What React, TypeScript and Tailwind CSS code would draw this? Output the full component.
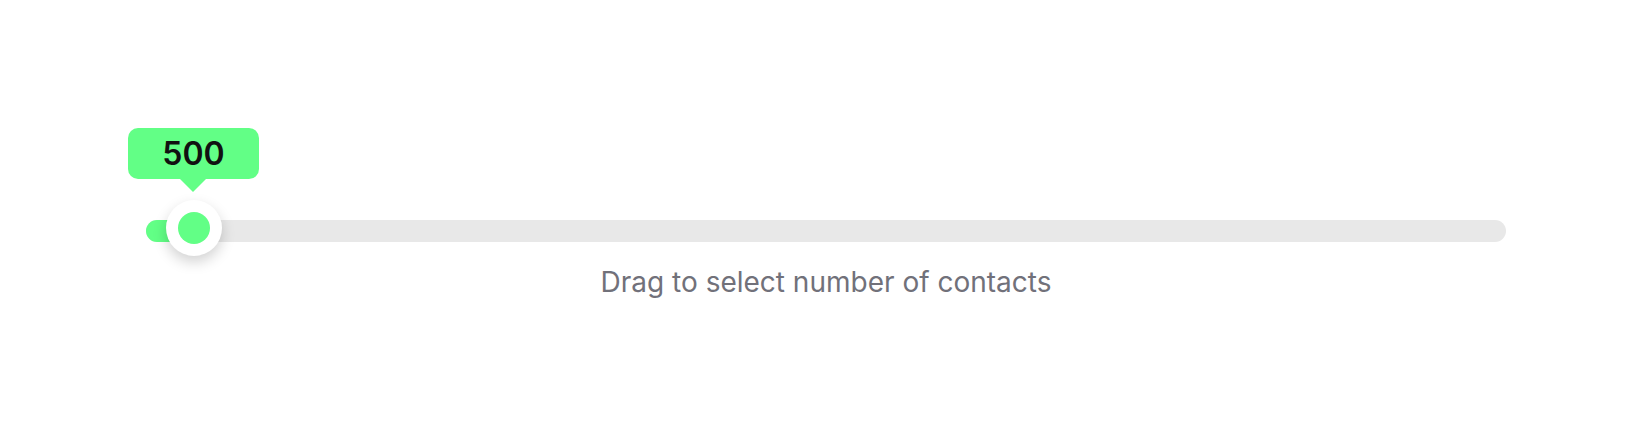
import React from "react";

export default function App() {
  return (
    <div className="h-[426px] w-full bg-white" style={{ fontFamily: "Inter, 'Noto Sans', sans-serif" }}>
      <div className="flex flex-col pt-[220px] pl-[146px]">
        <div className="relative w-[1360px] h-[22px]">
          <div className="h-full w-full rounded-full bg-[#e8e8e8]" />
          <div className="absolute left-0 top-0 h-full w-[48px] rounded-l-full bg-[#62ff86]" />
          <div className="absolute left-[20px] top-[-20px] flex h-[56px] w-[56px] items-center justify-center rounded-full bg-white shadow-[0_6px_14px_rgba(0,0,0,0.18)]">
            <div className="h-[32px] w-[32px] rounded-full bg-[#62ff86]" />
          </div>
          <div className="absolute left-[-18px] top-[-92px] flex h-[51px] w-[131px] items-center justify-center rounded-[10px] bg-[#62ff86]">
            <span className="text-[32px] font-semibold leading-none text-[#111111]">500</span>
            <div className="absolute left-[51px] top-[50px] h-0 w-0 border-l-[14px] border-r-[14px] border-t-[14px] border-l-transparent border-r-transparent border-t-[#62ff86]" />
          </div>
        </div>
        <div className="mt-[24px] w-[1360px] text-center text-[28px] leading-[32px] text-[#71717a]">
          Drag to select number of contacts
        </div>
      </div>
    </div>
  );
}
